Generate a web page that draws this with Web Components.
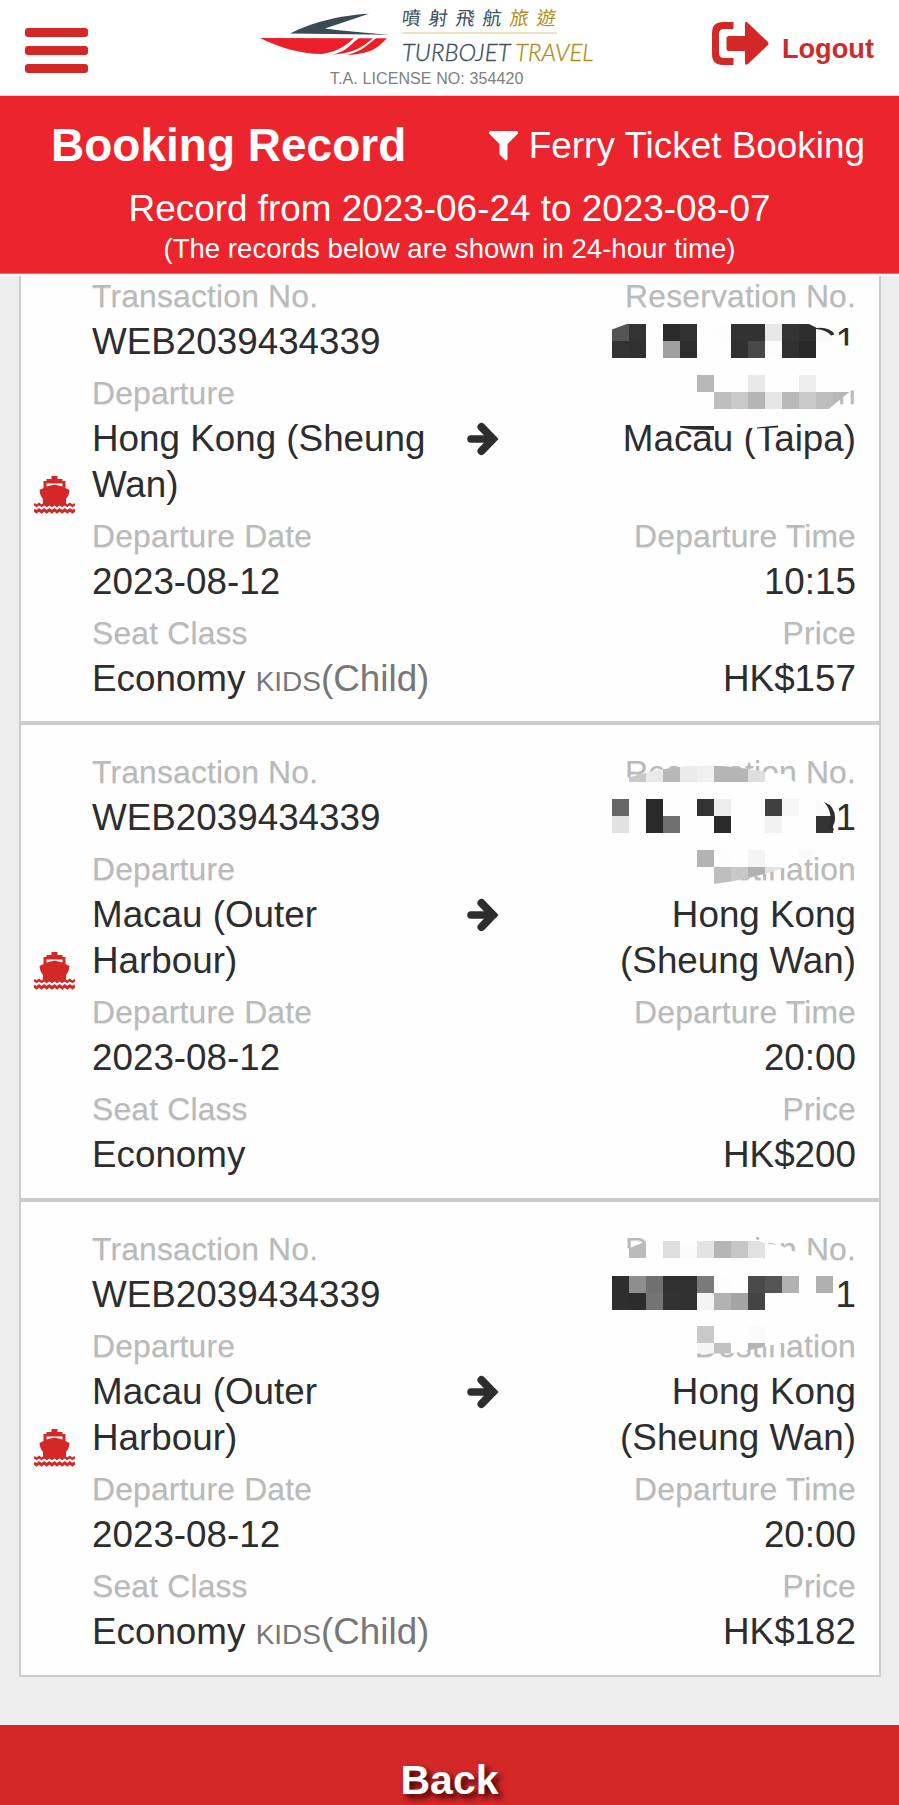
<!DOCTYPE html>
<html lang="en">
<head>
<meta charset="utf-8">
<title>Booking Record</title>
<style>
html, body {
    margin: 0;
    padding: 0;
}

body {
    background-color: #ededed;
    font-family: "Liberation Sans", Arial, "Noto Sans CJK TC", sans-serif;
    color: #2d2d2d;
}
</style>
</head>
<body>
<booking-page>
    <site-header slot="header" license="T.A. LICENSE NO: 354420"></site-header>
    <record-banner slot="banner" name="Booking Record" filter="Ferry Ticket Booking">
        <span>Record from 2023-06-24 to 2023-08-07</span>
        <span slot="note">(The records below are shown in 24-hour time)</span>
    </record-banner>
    <booking-record transaction="WEB2039434339" from="Hong Kong (Sheung Wan)" to="Macau (Taipa)"
        date="2023-08-12" time="10:15" seat="Economy" kids price="HK$157">
        <pixel-mask slot="mask" name="first"></pixel-mask>
    </booking-record>
    <booking-record transaction="WEB2039434339" from="Macau (Outer Harbour)" to="Hong Kong (Sheung Wan)"
        date="2023-08-12" time="20:00" seat="Economy" price="HK$200">
        <pixel-mask slot="mask" name="second"></pixel-mask>
    </booking-record>
    <booking-record transaction="WEB2039434339" from="Macau (Outer Harbour)" to="Hong Kong (Sheung Wan)"
        date="2023-08-12" time="20:00" seat="Economy" kids price="HK$182">
        <pixel-mask slot="mask" name="third"></pixel-mask>
    </booking-record>
    <back-button slot="footer">Back</back-button>
</booking-page>

<script>
function makeTemplate(html) {
    const template = document.createElement('template')
    template.innerHTML = html
    return template
}

const pageTemplate = makeTemplate(`
<style>
:host {
    display: flex;
    flex-direction: column;
    height: 1805px;
    overflow: hidden;
}

.content {
    flex: 1;
    min-height: 0;
    overflow: hidden;
    border-top: 2px solid #fbfbfb;
    padding: 0 18px 0 19px;
}

/* the list is scrolled a little under the banner */
.content__list {
    margin-top: -27.4px;
    border: 2px solid #ccc;
    border-top: 0;
    background-color: #fefefe;
}
</style>
<slot name="header"></slot>
<slot name="banner"></slot>
<main class="content">
    <div class="content__list"><slot></slot></div>
</main>
<slot name="footer"></slot>
`)

const headerTemplate = makeTemplate(`
<style>
:host {
    display: flex;
    justify-content: space-between;
    box-sizing: border-box;
    height: 96px;
    padding: 0 25px;
    background-color: #fff;
    border-bottom: 1px solid #f3cfd1;
}

svg {
    display: block;
    flex-shrink: 0;
}

.menu {
    display: flex;
    flex-direction: column;
    gap: 9px;
    width: 63px;
    padding-top: 28px;
}

.menu span {
    height: 9px;
    border-radius: 3px;
    background-color: #d42828;
}

.logo {
    width: 334px;
    margin-left: 54px;
}

.logo__row {
    display: flex;
    gap: 12px;
}

.logo__row svg {
    margin-top: 12px;
}

.logo__names {
    color: #3b4f5c;
    white-space: nowrap;
}

.logo__names b {
    font-weight: inherit;
    color: #b08e20;
}

.logo__chinese {
    height: 34px;
    width: 155px;
    box-sizing: border-box;
    border-bottom: 2px solid #eee2bd;
    font: 400 19px/34px "Noto Sans CJK TC", sans-serif;
    letter-spacing: 8px;
}

.logo__chinese span {
    display: inline-block;
    transform: skewX(-7deg);
}

.logo__english {
    font: italic 300 23.8px/36px Lato, sans-serif;
    letter-spacing: .1px;
    -webkit-text-stroke: .35px currentColor;
}

.logo__license {
    margin: -1px 0 0 70px;
    font-size: 16px;
    line-height: 20px;
    letter-spacing: .1px;
    color: #808080;
    white-space: nowrap;
}

.logout {
    display: flex;
    gap: 13px;
    font-size: 27.2px;
    font-weight: bold;
    line-height: 31px;
    color: #cc2b2c;
}

.logout svg {
    margin-top: 22px;
}

.logout span {
    margin-top: 33px;
}
</style>
<div class="menu"><span></span><span></span><span></span></div>
<div class="logo">
    <div class="logo__row">
        <svg width="130" height="44" viewBox="260 12 130 44">
            <path fill="#3b4b55" d="M369 13.7C340 15 310 23 290 33.6L389 34.7Q352 32 325 28.5Z"/>
            <path fill="#ea1f29" d="M260 38L354 38.2C347 44 340 51 322 54C300 54 278 47 260 38Z"/>
            <path fill="#ea1f29" d="M359 38.2H373C363 46 356 53 332 54.6C348 51 350 44 359 38.2ZM376 38.2H387C376 50 368 54 347 54.8C363 51 368 44 376 38.2Z"/>
        </svg>
        <div class="logo__names">
            <div class="logo__chinese"><span>噴射飛航<b>旅遊</b></span></div>
            <div class="logo__english">TURBOJET <b>TRAVEL</b></div>
        </div>
    </div>
    <div class="logo__license"></div>
</div>
<div class="logout">
    <svg width="57" height="43" viewBox="0 0 57 43" fill="#d42828">
        <path d="M21.500 0H11Q0 0 0 11V32Q0 43 11 43H21.500V36H12Q7 36 7 31V12Q7 7 12 7H21.500Z"/>
        <path d="M33 2Q33-1.500 36 1L56 20Q57 21.500 56 23L36 42Q33 44 33 41V29H17Q14.500 29 14.500 26.500V16.500Q14.500 14 17 14H33Z"/>
    </svg>
    <span>Logout</span>
</div>
`)

const bannerTemplate = makeTemplate(`
<style>
:host {
    display: block;
    box-sizing: border-box;
    height: 178px;
    padding-top: 26px;
    background-color: #ec242d;
    border-bottom: 1px solid #f0696f;
    color: #fff;
    text-align: center;
    white-space: nowrap;
}

.banner__top {
    display: flex;
    justify-content: space-between;
    padding: 0 34px 0 51px;
    margin-bottom: 17px;
}

h1 {
    margin: 0;
    font-size: 46px;
    line-height: 46px;
}

.banner__filter {
    display: flex;
    gap: 11px;
    font-size: 36.9px;
    line-height: 47px;
}

.banner__filter svg {
    margin-top: 9px;
}

.banner__period {
    font-size: 36.9px;
    line-height: 46px;
}

.banner__note {
    font-size: 27.6px;
    line-height: 34px;
}
</style>
<div class="banner__top">
    <h1></h1>
    <div class="banner__filter">
        <svg width="29" height="30" viewBox="0 0 29 30" fill="#fff"><path d="M1 0H28Q30 1 28.500 3L18.500 13V28Q18 30 16 29L11 24Q10.500 23.500 10.500 22V13L.5 3Q-1 1 1 0Z"/></svg>
        <span></span>
    </div>
</div>
<div class="banner__period"><slot></slot></div>
<div class="banner__note"><slot name="note"></slot></div>
`)

const recordTemplate = makeTemplate(`
<style>
:host {
    position: relative;
    display: flex;
    box-sizing: border-box;
    height: 476.5px;
    border-bottom: 4px solid #ccc;
    padding: 18.3px 23px 0 0;
}

:host(:last-of-type) {
    height: 473px;
    border-bottom: 0;
}

.record__icon {
    flex: 0 0 71px;
    padding: 209px 0 0 13px;
    box-sizing: border-box;
}

.record__fields {
    flex: 1;
    display: grid;
    grid-template-columns: 342px 1fr 326px;
    align-content: start;
}

.record__arrow {
    display: flex;
    justify-content: center;
    padding: 58px 0 0 1px;
}

.record__fields .start {
    grid-column: 1;
}

.record__fields .end {
    grid-column: 3;
}
</style>
<div class="record__icon">
    <svg width="41" height="38" viewBox="0 0 41 38" fill="#d42828">
        <path fill-rule="evenodd" d="M17.500 0H23.500V3H28.500V5H31.500V12L35.500 14Q35 20 32 23V29H9V23Q6 20 5.500 14L9.500 12V5H12.500V3H17.500ZM12.500 7.500V10.500L20.500 8.500L28.500 10.500V7.500Z"/>
        <path fill="none" stroke="#d42828" stroke-width="2.400" d="M0 28L2.500 30L5 28L7.600 30L10.200 28L12.700 30L15.300 28L17.900 30L20.500 28L23 30L25.600 28L28.200 30L30.700 28L33.300 30L35.800 28L38.400 30L41 28"/>
        <path fill="none" stroke="#fff" stroke-width="1.800" d="M0 30.700L2.500 32.700L5 30.700L7.600 32.700L10.200 30.700L12.700 32.700L15.300 30.700L17.900 32.700L20.500 30.700L23 32.700L25.600 30.700L28.200 32.700L30.700 30.700L33.300 32.700L35.800 30.700L38.400 32.700L41 30.700"/>
        <path fill="none" stroke="#d42828" stroke-width="3" d="M0 33.800L2.500 35.800L5 33.800L7.600 35.800L10.200 33.800L12.700 35.800L15.300 33.800L17.900 35.800L20.500 33.800L23 35.800L25.600 33.800L28.200 35.800L30.700 33.800L33.300 35.800L35.800 33.800L38.400 35.800L41 33.800"/>
    </svg>
</div>
<div class="record__fields"></div>
<slot name="mask"></slot>
`)

const fieldTemplate = makeTemplate(`
<style>
:host {
    display: block;
    font-size: 36.8px;
    line-height: 46.2px;
}

:host(.end) {
    text-align: right;
}

.field__label {
    padding-top: 7.6px;
    font-size: 31.9px;
    line-height: 43.2px;
    letter-spacing: .15px;
    color: #bababa;
    text-shadow: 0 1px 1px #e2e2e2;
    white-space: nowrap;
}

/* nudged to sit on the baseline without moving the rows */
.field__value {
    padding-top: 1px;
    margin-bottom: -1px;
}

.field__extra {
    color: #777;
    white-space: nowrap;
}

small {
    font-size: 28px;
}
</style>
<div class="field__label"></div>
<div class="field__value"><span></span><slot></slot></div>
`)

// Left edge of the mosaic grid and the size of one block
const GRID_X = 612
const CELL = 17

// Coordinates are those of the page, top is where the record begins.
// A row is its y and one grey level per block, with -- for an empty one.
const masks = {
    first: {
        top: 248.6,
        area: 'M628 323H808L816 327L832 335L836 345H855V372H860V386L850 391L829 408.300L780 425V428H714V430.500H680L660 427L632 409H612V329Z',
        rows: [
            [323.3, '55 33 -- 2b 32 -- fd 32 32 e8 33 2e fa'],
            [340.3, '33 30 -- 9f 2d -- -- 30 48 fc 30 29'],
            [374.3, '-- -- -- -- -- b8 -- -- e9 -- -- ee'],
            [391.3, '-- -- -- -- -- -- be c9 b5 e6 b9 c9 bd b8']
        ],
        strokes: 'M805 326L816 327.500Q830 326 834.500 334L831 335Q827 329.500 816 328.500ZM680 425.500H714V429.500L692 429L680 427ZM757 427L778 425V427L757 428Z'
    },
    second: {
        top: 725.1,
        area: 'M612 783L629 777.500Q692 757 765 772L784 774L800 786V799H816Q834 804 834.500 827L834 834L816 853L783 868Q750 880 714 884H612Z',
        rows: [
            [765, 'ff c8 ea b8 ea f0 b5 b5 df'],
            [799, '66 -- 2a -- -- 33 ed -- -- 40 f7 -- fa'],
            [816, 'e2 -- 2a 70 -- -- 2a -- -- f2 -- -- 33'],
            [850, '-- -- -- -- -- b3 fd -- f4 -- -- fa'],
            [867, '-- -- -- -- -- -- be c8 b2 e2']
        ],
        strokes: 'M824 802Q835 806 835 818Q835 824 832 827L834 829L833 831L829 829Q834 813 824 802Z'
    },
    third: {
        top: 1201.6,
        area: 'M612 1241L628 1248L646 1241V1230H754V1237L762 1242L780 1245L797 1252L811 1255L833 1275V1322L816 1330L785 1342L748 1350L731 1353H696V1358H612Z',
        rows: [
            [1241, '-- bb -- de fb e3 b5 c6 e1'],
            [1275.3, '2e 8e 70 30 30 7a fd -- 4a 55 b2 -- b0'],
            [1292.3, '2e 2c 74 32 30 f4 b2 a4 44'],
            [1326, '-- -- -- -- -- c9 -- -- fb'],
            [1343, '-- -- -- -- -- f5 c2 -- b5']
        ],
        strokes: ''
    }
}

class BookingPage extends HTMLElement {
    constructor() {
        super()
        this.attachShadow({mode: 'open'})
        this.shadowRoot.appendChild(pageTemplate.content.cloneNode(true))
    }
}

class SiteHeader extends HTMLElement {
    constructor() {
        super()
        this.attachShadow({mode: 'open'})
        this.shadowRoot.appendChild(headerTemplate.content.cloneNode(true))
        this.shadowRoot.querySelector('.logo__license').textContent = this.getAttribute('license')
    }
}

class RecordBanner extends HTMLElement {
    constructor() {
        super()
        this.attachShadow({mode: 'open'})
        this.shadowRoot.appendChild(bannerTemplate.content.cloneNode(true))
        this.shadowRoot.querySelector('h1').textContent = this.getAttribute('name')
        this.shadowRoot.querySelector('.banner__filter span').textContent = this.getAttribute('filter')
    }
}

class RecordField extends HTMLElement {
    connectedCallback() {
        this.attachShadow({mode: 'open'})
        this.shadowRoot.appendChild(fieldTemplate.content.cloneNode(true))
        this.shadowRoot.querySelector('.field__label').textContent = this.getAttribute('label')
        this.shadowRoot.querySelector('.field__value span').textContent = this.getAttribute('value')

        if (this.hasAttribute('kids')) {
            this.shadowRoot.querySelector('.field__value').insertAdjacentHTML('beforeend',
                ' <span class="field__extra"><small>KIDS</small>(Child)</span>')
        }
    }
}

class BookingRecord extends HTMLElement {
    constructor() {
        super()
        this.attachShadow({mode: 'open'})
        this.shadowRoot.appendChild(recordTemplate.content.cloneNode(true))

        const get = name => this.getAttribute(name)
        const kids = this.hasAttribute('kids') ? 'kids' : ''
        this.shadowRoot.querySelector('.record__fields').innerHTML = `
            <record-field class="start" label="Transaction No." value="${get('transaction')}"></record-field>
            <record-field class="end" label="Reservation No." value="1"></record-field>
            <record-field class="start" label="Departure" value="${get('from')}"></record-field>
            <div class="record__arrow">
                <svg width="32" height="34" viewBox="0 0 32 34"><path fill="none" stroke="#2d2d2d" stroke-width="7.500" stroke-linecap="round" stroke-linejoin="round" d="M4 17H26"/><path fill="none" stroke="#2d2d2d" stroke-width="8" stroke-linecap="round" d="M14.500 5L26 17L14.500 29"/></svg>
            </div>
            <record-field class="end" label="Destination" value="${get('to')}"></record-field>
            <record-field class="start" label="Departure Date" value="${get('date')}"></record-field>
            <record-field class="end" label="Departure Time" value="${get('time')}"></record-field>
            <record-field class="start" label="Seat Class" value="${get('seat')}" ${kids}></record-field>
            <record-field class="end" label="Price" value="${get('price')}"></record-field>
        `
    }
}

class PixelMask extends HTMLElement {
    constructor() {
        super()
        this.attachShadow({mode: 'open'})

        const mask = masks[this.getAttribute('name')]
        let blocks = ''
        mask.rows.forEach(([y, levels]) => {
            levels.split(' ').forEach((level, i) => {
                if (level !== '--') {
                    blocks += `<rect x="${GRID_X + i * CELL}" y="${y}" width="${CELL}" height="${CELL}" fill="#${level.repeat(3)}"/>`
                }
            })
        })

        this.shadowRoot.innerHTML = `
            <style>
            :host {
                position: absolute;
                top: 0;
                right: 19px;
            }
            </style>
            <svg width="260" height="200" viewBox="600 ${mask.top} 260 200">
                <clipPath id="area"><path d="${mask.area}"/></clipPath>
                <g clip-path="url(#area)" shape-rendering="crispEdges">
                    <path fill="#fefefe" d="${mask.area}"/>
                    ${blocks}
                </g>
                <path fill="#2d2d2d" d="${mask.strokes}"/>
            </svg>
        `
    }
}

class BackButton extends HTMLElement {
    constructor() {
        super()
        this.attachShadow({mode: 'open'})
        this.shadowRoot.innerHTML = `
            <style>
            :host {
                display: block;
                flex: 0 0 80px;
                box-sizing: border-box;
                padding-top: 32px;
                background-color: #d42828;
                color: #fff;
                font-size: 41px;
                font-weight: bold;
                line-height: 46px;
                text-align: center;
                text-shadow: 4px 4px 6px #300;
            }
            </style>
            <slot></slot>
        `
    }
}

window.customElements.define('booking-page', BookingPage)
window.customElements.define('site-header', SiteHeader)
window.customElements.define('record-banner', RecordBanner)
window.customElements.define('record-field', RecordField)
window.customElements.define('booking-record', BookingRecord)
window.customElements.define('pixel-mask', PixelMask)
window.customElements.define('back-button', BackButton)
</script>
</body>
</html>
